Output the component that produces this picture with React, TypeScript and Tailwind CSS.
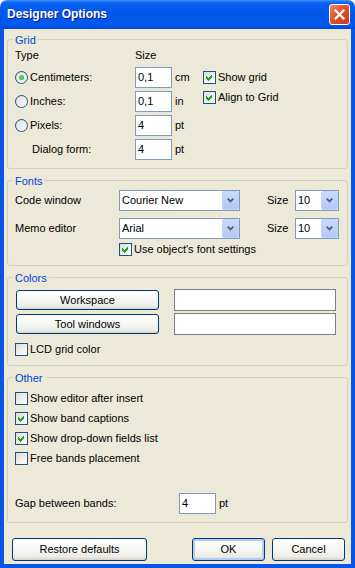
import React from "react";

function CheckBox({ checked }: { checked?: boolean }) {
  return (
    <div className="relative w-[13px] h-[13px] shrink-0 border border-[#1C5180] bg-[linear-gradient(135deg,#DCDCD7,#FFFFFF)]">
      {checked && (
        <svg width="11" height="11" viewBox="0 0 11 11" className="absolute left-0 top-0" shapeRendering="crispEdges">
          <polygon points="2,4 4,6 8,2 8,5 4,9 2,7" fill="#21A121" />
        </svg>
      )}
    </div>
  );
}

function Radio({ checked }: { checked?: boolean }) {
  return (
    <div className="w-[13px] h-[13px] shrink-0 rounded-full border border-[#1C5180] bg-[linear-gradient(135deg,#DCDCD7,#FFFFFF)] flex items-center justify-center">
      {checked && <div className="w-[5px] h-[5px] rounded-full bg-[radial-gradient(circle_at_40%_40%,#6FE06F,#21A121)]" />}
    </div>
  );
}

function Edit({ value, w }: { value: string; w: string }) {
  return (
    <div className={`h-[21px] ${w} shrink-0 border border-[#7F9DB9] bg-white flex items-center pl-[2px]`}>
      {value}
    </div>
  );
}

function Combo({ value, w }: { value: string; w: string }) {
  return (
    <div className={`h-[21px] ${w} shrink-0 border border-[#7F9DB9] bg-white flex items-center`}>
      <span className="flex-1 pl-[2px] overflow-hidden whitespace-nowrap">{value}</span>
      <div className="w-[17px] h-[19px] shrink-0 rounded-[2px] border border-[#C3D3FD] bg-[linear-gradient(to_bottom,#CAD9FD,#B2C7F6)] flex items-center justify-center">
        <svg width="7" height="5" viewBox="0 0 7 5">
          <path d="M0.7 0.7 L3.5 3.5 L6.3 0.7" stroke="#4D6185" strokeWidth="1.8" fill="none" />
        </svg>
      </div>
    </div>
  );
}

function Button({ label, w, def }: { label: string; w: string; def?: boolean }) {
  return (
    <div
      className={`${w} h-full shrink-0 rounded-[3px] border border-[#003C74] bg-[linear-gradient(to_bottom,#FFFFFF,#F4F4F0_60%,#ECEBE6_85%,#D6D0C5)] flex items-center justify-center ${
        def ? "shadow-[inset_0_0_0_2px_#B4CCF4]" : ""
      }`}
    >
      {label}
    </div>
  );
}

function Group({ title, h, children }: { title: string; h: string; children: React.ReactNode }) {
  return (
    <div className={`relative shrink-0 border border-[#D0D0BF] rounded-[3px] ${h}`}>
      <span className="absolute left-[5px] top-[-6px] px-[2px] bg-[#ECE9D8] text-[#0046D5]">{title}</span>
      {children}
    </div>
  );
}

export default function App() {
  return (
    <div className="w-[355px] h-[568px] bg-white font-['Liberation_Sans',Arial,sans-serif] text-[11px] leading-[13px] text-black">
      <div className="flex flex-col w-full h-full">
        {/* Title bar */}
        <div className="h-[29px] shrink-0 rounded-t-[7px] bg-[linear-gradient(to_bottom,#3D93FF_0%,#0A62F2_10%,#0057EA_45%,#0058EE_85%,#0048D8_100%)] flex items-center justify-between pl-[7px] pr-[5px]">
          <span className="text-white font-bold text-[12px] [text-shadow:1px_1px_#0A1E8C]">Designer Options</span>
          <div className="w-[21px] h-[21px] rounded-[3px] border border-white bg-[linear-gradient(135deg,#F08A66,#E0532F_45%,#C7391A)] flex items-center justify-center">
            <svg width="11" height="11" viewBox="0 0 11 11">
              <path d="M1.5 1.5 L9.5 9.5 M9.5 1.5 L1.5 9.5" stroke="white" strokeWidth="2.2" strokeLinecap="square" />
            </svg>
          </div>
        </div>

        {/* Body */}
        <div className="flex-1 flex flex-col border-x-4 border-b-4 border-[#0A55E4] bg-[#ECE9D8] px-[3px] pt-[10px]">
          {/* Grid */}
          <Group title="Grid" h="h-[130px]">
            <div className="flex pl-[7px] pt-[9px]">
              <div className="flex flex-col w-[188px]">
                <div className="flex h-[13px]">
                  <span className="w-[120px]">Type</span>
                  <span>Size</span>
                </div>
                <div className="flex flex-col gap-[3px] mt-[5px]">
                  <div className="flex items-center h-[21px]">
                    <div className="flex items-center gap-[2px] w-[120px]">
                      <Radio checked />
                      <span>Centimeters:</span>
                    </div>
                    <Edit value="0,1" w="w-[37px]" />
                    <span className="ml-[3px]">cm</span>
                  </div>
                  <div className="flex items-center h-[21px]">
                    <div className="flex items-center gap-[2px] w-[120px]">
                      <Radio />
                      <span>Inches:</span>
                    </div>
                    <Edit value="0,1" w="w-[37px]" />
                    <span className="ml-[3px]">in</span>
                  </div>
                  <div className="flex items-center h-[21px]">
                    <div className="flex items-center gap-[2px] w-[120px]">
                      <Radio />
                      <span>Pixels:</span>
                    </div>
                    <Edit value="4" w="w-[37px]" />
                    <span className="ml-[3px]">pt</span>
                  </div>
                  <div className="flex items-center h-[21px]">
                    <span className="w-[120px] pl-[17px]">Dialog form:</span>
                    <Edit value="4" w="w-[37px]" />
                    <span className="ml-[3px]">pt</span>
                  </div>
                </div>
              </div>
              <div className="flex flex-col mt-[18px]">
                <div className="flex items-center gap-[2px] h-[20px]">
                  <CheckBox checked />
                  <span>Show grid</span>
                </div>
                <div className="flex items-center gap-[2px] h-[20px]">
                  <CheckBox checked />
                  <span>Align to Grid</span>
                </div>
              </div>
            </div>
          </Group>

          {/* Fonts */}
          <div className="mt-[11px]">
            <Group title="Fonts" h="h-[86px]">
              <div className="flex flex-col pl-[7px] pt-[9px]">
                <div className="flex items-center h-[21px]">
                  <span className="w-[104px]">Code window</span>
                  <Combo value="Courier New" w="w-[121px]" />
                  <span className="ml-[27px] w-[28px]">Size</span>
                  <Combo value="10" w="w-[44px]" />
                </div>
                <div className="flex items-center h-[21px] mt-[7px]">
                  <span className="w-[104px]">Memo editor</span>
                  <Combo value="Arial" w="w-[121px]" />
                  <span className="ml-[27px] w-[28px]">Size</span>
                  <Combo value="10" w="w-[44px]" />
                </div>
                <div className="flex items-center gap-[2px] h-[13px] mt-[4px] pl-[104px]">
                  <CheckBox checked />
                  <span>Use object's font settings</span>
                </div>
              </div>
            </Group>
          </div>

          {/* Colors */}
          <div className="mt-[11px]">
            <Group title="Colors" h="h-[89px]">
              <div className="flex flex-col pl-[7px] pt-[11px]">
                <div className="flex items-center h-[22px]">
                  <div className="h-[20px] ml-[1px] flex">
                    <Button label="Workspace" w="w-[143px]" />
                  </div>
                  <div className="ml-[15px] w-[162px] h-[22px] border border-[#7F7F7F] bg-white" />
                </div>
                <div className="flex items-center h-[22px] mt-[2px]">
                  <div className="h-[20px] ml-[1px] flex">
                    <Button label="Tool windows" w="w-[143px]" />
                  </div>
                  <div className="ml-[15px] w-[162px] h-[22px] border border-[#7F7F7F] bg-white" />
                </div>
                <div className="flex items-center gap-[2px] h-[13px] mt-[8px]">
                  <CheckBox />
                  <span>LCD grid color</span>
                </div>
              </div>
            </Group>
          </div>

          {/* Other */}
          <div className="mt-[11px]">
            <Group title="Other" h="h-[146px]">
              <div className="flex flex-col pl-[7px] pt-[10px]">
                <div className="flex items-center gap-[2px] h-[20px]">
                  <CheckBox />
                  <span>Show editor after insert</span>
                </div>
                <div className="flex items-center gap-[2px] h-[20px]">
                  <CheckBox checked />
                  <span>Show band captions</span>
                </div>
                <div className="flex items-center gap-[2px] h-[20px]">
                  <CheckBox checked />
                  <span>Show drop-down fields list</span>
                </div>
                <div className="flex items-center gap-[2px] h-[20px]">
                  <CheckBox />
                  <span>Free bands placement</span>
                </div>
                <div className="flex items-center h-[21px] mt-[25px]">
                  <span className="w-[164px]">Gap between bands:</span>
                  <Edit value="4" w="w-[37px]" />
                  <span className="ml-[3px]">pt</span>
                </div>
              </div>
            </Group>
          </div>

          {/* Buttons */}
          <div className="flex h-[23px] mt-[15px] pl-[5px] pr-[3px]">
            <Button label="Restore defaults" w="w-[135px]" />
            <div className="flex-1" />
            <Button label="OK" w="w-[73px]" def />
            <div className="w-[7px]" />
            <Button label="Cancel" w="w-[73px]" />
          </div>
        </div>
      </div>
    </div>
  );
}
